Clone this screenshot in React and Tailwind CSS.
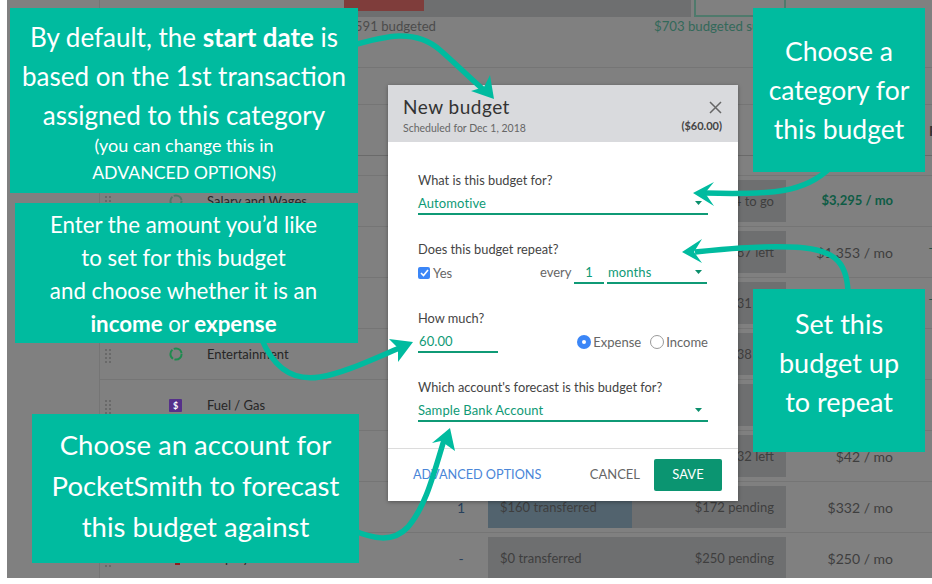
import React from 'react';

const font = { fontFamily: 'Lato, "Open Sans", sans-serif' };

const rows = [
  { name: 'Salary and Wages', icon: 'ringDim', right: '$1,204 to go', amount: '$3,295 / mo', strong: true },
  { right: '$1,087 left', amount: '$1,353 / mo', side: 'T' },
  { right: '$731 left', side: 'T' },
  { name: 'Entertainment', icon: 'ring', right: '$38 left' },
  { name: 'Fuel / Gas', icon: 'fuel' },
  { right: '$32 left', amount: '$42 / mo' },
  { count: '1', left: '$160 transferred', right: '$172 pending', amount: '$332 / mo' },
  { name: 'Employment', icon: 'red', count: '-', left: '$0 transferred', right: '$250 pending', amount: '$250 / mo' },
];

function Handle() {
  return (
    <svg width="6" height="14" viewBox="0 0 6 14" fill="#696969">
      {[0, 4, 8, 12].map((y) => (
        <g key={y}>
          <rect x="0" y={y} width="2" height="2" />
          <rect x="4" y={y} width="2" height="2" />
        </g>
      ))}
    </svg>
  );
}

function RowIcon({ type }) {
  if (type === 'ring' || type === 'ringDim') {
    return (
      <svg width="14" height="14" viewBox="0 0 14 14" fill="none" stroke={type === 'ring' ? '#1f8a4f' : '#4d7a68'} strokeWidth="2">
        <circle cx="7" cy="7" r="5.6" strokeDasharray="10.2 1.5" />
      </svg>
    );
  }
  if (type === 'fuel') {
    return <div className="w-[13px] h-[13px] bg-[#55308a] rounded-[1px] text-white text-[9px] leading-[13px] text-center font-bold">$</div>;
  }
  if (type === 'red') {
    return <div className="w-[5px] h-[14px] ml-[6px] bg-[#8f1f1f]" />;
  }
  return null;
}

function BudgetRow({ row }) {
  return (
    <div className="flex items-center h-[51px] border-b border-[#757575] text-[14px] text-[#3e3e3e]">
      <div className="w-[66px] pl-[5px] pt-[3px] flex-none"><Handle /></div>
      <div className="w-[41px] pl-[3px] flex-none"><RowIcon type={row.icon} /></div>
      <div className="w-[233px] pt-[2px] flex-none text-[13px] text-[#262626]">{row.name}</div>
      <div className="w-[42px] flex-none text-center text-[#27405c]">{row.count}</div>
      <div className="w-[6px] flex-none" />
      <div className="w-[298px] h-[42px] flex-none flex items-center justify-between bg-[#6e6f70] text-[13px]">
        {row.left && (
          <div className={`h-full flex items-center pl-[12px] pt-px ${row.count === '1' ? 'w-[144px] bg-[#52636e]' : ''}`}>{row.left}</div>
        )}
        <div className="ml-auto pr-[12px] pt-px">{row.right}</div>
      </div>
      <div className={`w-[107px] flex-none text-right ${row.strong ? 'font-bold text-[13px] text-[#0e5c45]' : ''}`}>{row.amount}</div>
      <div className="flex-1 pl-[36px] text-[#27504a]">{row.side}</div>
    </div>
  );
}

function Background() {
  return (
    <div className="ml-[7px] h-[578px] bg-[#808080] flex overflow-hidden">
      <div className="w-[93px] flex-none border-r border-[#757575]" />
      <div className="flex-1 min-w-0">
        <div className="h-[17px] flex pl-[244px]">
          <div className="w-[347px] bg-[#6e6f70]">
            <div className="w-[80px] h-[11px] bg-[#7f3d3b]" />
          </div>
          <div className="w-[92px] ml-[3px] border-2 border-t-0 border-[#4f7a6c]" />
        </div>
        <div className="h-[51px] border-b border-[#757575] flex text-[13.2px] whitespace-nowrap overflow-hidden">
          <div className="w-[336px] text-right text-[#4c4c4c]">591 budgeted</div>
          <div className="ml-[218px] text-[#33695a]">$703 budgeted su</div>
        </div>
        <div className="h-[37px] border-b border-[#757575]" />
        <div className="h-[51px] border-b border-[#6a6a6a] pl-[829px] pt-[15px] text-[14px] font-bold text-[#333]">F</div>
        <div className="h-[20px] border-b border-[#757575]" />
        {rows.map((row, i) => <BudgetRow key={i} row={row} />)}
      </div>
    </div>
  );
}

function Caret() {
  return (
    <svg width="7" height="4" viewBox="0 0 7 4" className="flex-none"><polygon points="0,0 7,0 3.5,4" fill="#0b8f6c" /></svg>
  );
}

function FieldLine({ className, children }) {
  return (
    <div className={`h-[27px] border-b-2 border-[#0f9a76] flex items-end justify-between pb-[2px] text-[13px] leading-4 tracking-[0.1px] text-[#0f9a76] ${className}`}>
      {children}
    </div>
  );
}

function SelectField({ value }) {
  return (
    <FieldLine className="pr-[6px]">
      <span>{value}</span>
      <span className="pb-[6px]"><Caret /></span>
    </FieldLine>
  );
}

function Label({ children }) {
  return <div className="text-[12.8px] leading-4 text-[#444]">{children}</div>;
}

function Modal() {
  return (
    <div className="absolute left-[388px] top-[85px] w-[350px] h-[416px] bg-white shadow-[0_1px_4px_rgba(0,0,0,0.35)] flex flex-col">
      <div className="h-[57px] flex-none bg-[#d9dadd] px-[15px] pt-[10px] flex justify-between">
        <div>
          <div className="text-[19px] leading-6 tracking-[0.5px] text-[#333]">New budget</div>
          <div className="text-[10.5px] leading-[14px] mt-[2px] text-[#666]">Scheduled for Dec 1, 2018</div>
        </div>
        <div className="flex flex-col items-end">
          <svg width="13" height="13" viewBox="0 0 13 13" className="mt-[6px] mr-px" stroke="#666" strokeWidth="1.5" fill="none">
            <path d="M1 1 L12 12 M12 1 L1 12" />
          </svg>
          <div className="text-[11px] leading-[14px] mt-[5px] mr-px font-bold text-[#444]">($60.00)</div>
        </div>
      </div>
      <div className="flex-1 px-[30px] pt-[30px]">
        <Label>What is this budget for?</Label>
        <SelectField value="Automotive" />
        <div className="mt-[26px]"><Label>Does this budget repeat?</Label></div>
        <div className="flex items-end h-[27px]">
          <div className="flex items-center w-[122px] pb-[3px]">
            <div className="w-[12px] h-[12px] rounded-[2px] bg-[#3b86f7] flex items-center justify-center">
              <svg width="9" height="8" viewBox="0 0 9 8" fill="none" stroke="white" strokeWidth="1.6"><path d="M1 4 L3.5 6.5 L8 1" /></svg>
            </div>
            <span className="ml-[3px] text-[13px] leading-4 text-[#666]">Yes</span>
          </div>
          <span className="w-[34px] pb-[4px] text-[13px] leading-4 text-[#666]">every</span>
          <FieldLine className="w-[30px] !justify-center">1</FieldLine>
          <FieldLine className="w-[100px] ml-[3px] pl-px pr-[5px]">
            <span>months</span>
            <span className="pb-[6px]"><Caret /></span>
          </FieldLine>
        </div>
        <div className="mt-[26px]"><Label>How much?</Label></div>
        <div className="flex items-end justify-between">
          <FieldLine className="w-[80px] pl-px">60.00</FieldLine>
          <div className="flex items-center pb-[3px] text-[13px] leading-4 text-[#666]">
            <div className="w-[14px] h-[14px] rounded-full bg-[#3b86f7] flex items-center justify-center">
              <div className="w-[4px] h-[4px] rounded-full bg-white" />
            </div>
            <span className="ml-[2px]">Expense</span>
            <div className="w-[14px] h-[14px] rounded-full border border-[#9a9a9a] ml-[9px]" />
            <span className="ml-[2px]">Income</span>
          </div>
        </div>
        <div className="mt-[26px]"><Label>Which account&apos;s forecast is this budget for?</Label></div>
        <SelectField value="Sample Bank Account" />
      </div>
      <div className="h-[53px] flex-none border-t border-[#dcdcdc] flex items-center pl-[25px] pr-[16px] text-[12.7px]">
        <span className="text-[#4a86d8]">ADVANCED OPTIONS</span>
        <span className="ml-auto text-[13px] text-[#666]">CANCEL</span>
        <button className="ml-[14px] w-[68px] h-[32px] rounded-[2px] bg-[#0b9571] text-[13px] text-white">SAVE</button>
      </div>
    </div>
  );
}

function Arrows() {
  const teal = '#00bb9f';
  const lines = [
    'M350 46 C385 36 415 28 440 50 C456 64 470 78 486 92',
    'M830 168 C805 192 775 195 705 193',
    'M848 292 C847 262 835 248 790 247 C755 246 725 249 695 252',
    'M262 340 C275 370 295 381 320 377 C345 373 375 358 402 347',
    'M352 530 C372 538 392 544 408 527 C425 507 432 480 444 440',
  ];
  const heads = [
    '494,99 471,91 484,87 490,75',
    '693,193 714,182 705,193 714,206',
    '682,252 702,239 694,252 702,263',
    '413,342 389,339 398,348 398,362',
    '450,428 432,443 441,441 455,451',
  ];
  return (
    <svg className="absolute inset-0" width="932" height="584" viewBox="0 0 932 584" fill="none">
      {lines.map((d) => <path key={d} d={d} stroke={teal} strokeWidth="5.5" />)}
      {heads.map((p) => <polygon key={p} points={p} fill={teal} />)}
    </svg>
  );
}

function Callout({ className, children }) {
  return (
    <div className={`absolute bg-[#00bb9f] text-white text-center ${className}`}>
      {children}
    </div>
  );
}

export default function App() {
  return (
    <div className="relative w-[932px] h-[584px] bg-white overflow-hidden" style={font}>
      <Background />
      <Modal />
      <Arrows />
      <Callout className="left-[10px] top-[8px] w-[348px] h-[185px] pt-[10px] text-[26px] leading-[39px]">
        <div>By default, the <b>start date</b> is</div>
        <div>based on the 1st transaction</div>
        <div>assigned to this category</div>
        <div className="text-[18px] leading-[27px] -mt-[3px]">(you can change this in</div>
        <div className="text-[17.7px] leading-[27px]">ADVANCED OPTIONS)</div>
      </Callout>
      <Callout className="left-[15px] top-[203px] w-[343px] h-[140px] pt-[5px] pr-[6px] text-[22.3px] leading-[33px]">
        <div>Enter the amount you&rsquo;d like</div>
        <div>to set for this budget</div>
        <div>and choose whether it is an</div>
        <div><b>income</b> or <b>expense</b></div>
      </Callout>
      <Callout className="left-[32px] top-[414px] w-[327px] h-[149px] pt-[10px] text-[27.5px] leading-[41px]">
        <div>Choose an account for</div>
        <div>PocketSmith to forecast</div>
        <div>this budget against</div>
      </Callout>
      <Callout className="left-[753px] top-[8px] w-[172px] h-[164px] pt-[24px] text-[26.5px] leading-[39px]">
        <div>Choose a</div>
        <div>category for</div>
        <div>this budget</div>
      </Callout>
      <Callout className="left-[753px] top-[289px] w-[172px] h-[163px] pt-[15px] text-[27px] leading-[39px]">
        <div>Set this</div>
        <div>budget up</div>
        <div>to repeat</div>
      </Callout>
    </div>
  );
}
